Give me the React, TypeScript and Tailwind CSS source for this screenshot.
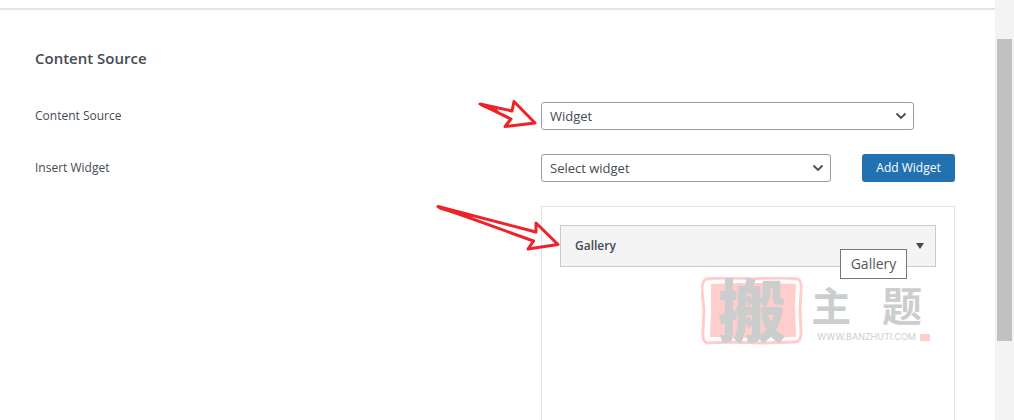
import { useState } from "react";
import type { SelectHTMLAttributes } from "react";

function Select({ className, children, ...rest }: SelectHTMLAttributes<HTMLSelectElement>) {
  return (
    <div className={`relative ${className ?? ""}`}>
      <select
        {...rest}
        className="block h-7 w-full appearance-none rounded-[3px] border border-[#9c9da0] bg-white pr-6 pl-2 text-[13px] leading-5 text-[#454a54] outline-none focus:border-[#2271b1]">
        {children}
      </select>
      <svg
        viewBox="0 0 12 8"
        className="pointer-events-none absolute top-2.5 right-[7px] h-2 w-3"
        fill="none"
        stroke="#50494d"
        strokeWidth="1.8"
        aria-hidden="true">
        <path d="M1.5 1.5 6 6l4.500-4.500" />
      </svg>
    </div>
  );
}

function SourceArrow() {
  return (
    <svg
      viewBox="0 0 64 34"
      className="pointer-events-none absolute -top-1 right-full h-[34px] w-16"
      fill="none"
      stroke="#ee2329"
      strokeWidth="3"
      strokeLinecap="round"
      strokeLinejoin="round"
      aria-hidden="true">
      <path d="M3 6 35 13 37 3.500 58 25 28 28.500 34 21Z" />
      <path d="M5 7 20 13" />
    </svg>
  );
}

function ItemArrow() {
  return (
    <svg
      viewBox="0 0 128 50"
      className="pointer-events-none absolute -top-1 -left-[108px] h-[50px] w-32"
      fill="none"
      stroke="#ee2329"
      strokeWidth="3"
      strokeLinecap="round"
      strokeLinejoin="round"
      aria-hidden="true">
      <path d="M4 3.500 102 29 102 20 124 41.500 94 46 99.500 38Z" />
      <path d="M6 5 36 14" />
    </svg>
  );
}

function Watermark() {
  return (
    <div
      className="pointer-events-none absolute top-[70px] right-6 flex items-start text-[#cccecd] select-none"
      lang="zh-CN">
      <div className="relative flex h-[68px] w-[102px] items-center justify-center">
        <svg viewBox="0 0 102 68" className="absolute inset-0 h-full w-full" fill="none" aria-hidden="true">
          <path
            d="M5 2Q30 0 52 2 76 0 97 2 101 4 100 14L99 34 100 55Q100 65 94 65L60 66 28 65 6 66Q1 64 2 54L3 34 1 14Q1 4 5 2Z"
            stroke="#ffcdcb"
            strokeWidth="3"
          />
          <path d="M10 7Q50 5 95 7L94 29 95 60 48 61 9 60 10 34Z" fill="#ffcdcb" />
        </svg>
        <span className="relative text-[68px] leading-[68px] font-black">搬</span>
      </div>
      <div className="pt-1.5">
        <div className="flex justify-between px-2 text-[40px] leading-[46px] font-bold">
          <span>主</span>
          <span>题</span>
        </div>
        <div className="flex items-center gap-1 pt-0.5 pl-3.5 font-['Inter'] text-[9px] leading-3">
          WWW.BANZHUTI.COM
          <span className="h-[7px] w-2.5 bg-[#ffcdcb]" />
        </div>
      </div>
    </div>
  );
}

export default function App() {
  const [source, setSource] = useState("widget");
  const [widget, setWidget] = useState("");

  return (
    <div className="flex min-h-screen items-stretch overflow-hidden bg-white font-['Open_Sans','Noto_Sans_CJK_SC',sans-serif] text-[#454a54]">
      <main className="flex min-w-0 flex-1 flex-col">
        <div className="h-2.5 border-b-2 border-[#e5e5e6]" />

        <section className="flex flex-1 flex-col pt-9 pr-10 pl-[35px]">
          <h2 className="text-[15px] leading-6 font-semibold">Content Source</h2>

          <div className="mt-8 grid grid-cols-[11fr_9fr] items-center">
            <label htmlFor="source" className="text-[12px] leading-5">
              Content Source
            </label>
            <div className="relative">
              <SourceArrow />
              <Select id="source" className="w-9/10" value={source} onChange={(e) => setSource(e.target.value)}>
                <option value="widget">Widget</option>
              </Select>
            </div>
          </div>

          <div className="mt-6 grid grid-cols-[11fr_9fr] items-center">
            <label htmlFor="widget" className="text-[12px] leading-5">
              Insert Widget
            </label>
            <div className="flex items-center justify-between">
              <Select id="widget" className="w-7/10" value={widget} onChange={(e) => setWidget(e.target.value)}>
                <option value="">Select widget</option>
                <option value="gallery">Gallery</option>
              </Select>
              <button
                type="button"
                className="h-7 w-[93px] rounded-[3px] bg-[#2271b1] text-[12px] leading-5 text-white hover:bg-[#135e96]">
                Add Widget
              </button>
            </div>
          </div>

          <div className="mt-6 grid flex-1 grid-cols-[11fr_9fr]">
            <div className="relative col-start-2 border border-b-0 border-[#e3e3e4] p-[18px]">
              <ItemArrow />
              <Watermark />
              <div className="relative flex h-[42px] items-center justify-between border border-[#c9cacc] bg-[#f4f4f4] pr-[11px] pl-3.5">
                <h3 className="text-[12px] leading-5 font-semibold">Gallery</h3>
                <button type="button" aria-label="Toggle Gallery">
                  <svg viewBox="0 0 8 6" className="h-1.5 w-2" fill="#454a54" aria-hidden="true">
                    <path d="M0 0h8L4 6Z" />
                  </svg>
                </button>
                <div
                  role="tooltip"
                  className="absolute top-[23px] right-7 h-[30px] w-[67px] border border-[#767478] bg-white text-center text-[14px] leading-7 text-[#575757]">
                  Gallery
                </div>
              </div>
            </div>
          </div>
        </section>
      </main>

      <div className="flex w-[19px] flex-col bg-[#f3f3f3] px-0.5 pt-[39px]" aria-hidden="true">
        <div className="h-[302px] bg-[#c1c1c1]" />
      </div>
    </div>
  );
}
